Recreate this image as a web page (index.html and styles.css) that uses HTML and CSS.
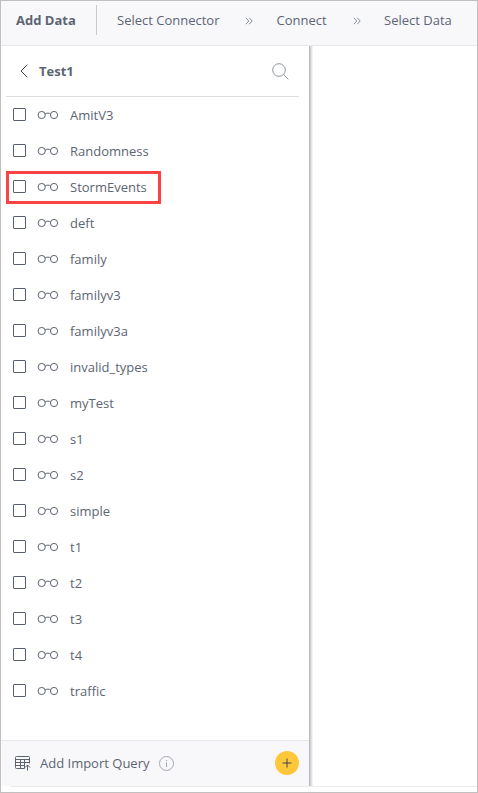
FILE: index.html
```html
<!DOCTYPE html>
<html lang="en">
<head>
<meta charset="utf-8">
<title>Add Data</title>
<link rel="stylesheet" href="styles.css">
</head>
<body>
<svg class="defs" aria-hidden="true">
  <symbol id="glasses" viewBox="0 0 22 10"><circle cx="4.7" cy="5" r="3.6"/><circle cx="17" cy="5" r="3.6"/><path d="M8 4.2C9 2.8 12.7 2.8 13.7 4.2"/></symbol>
  <symbol id="chevrons" viewBox="0 0 8 8"><path d="M.8.8 3.8 4 .8 7.2M4.2.8 7.2 4 4.2 7.2"/></symbol>
</svg>
<div class="app">
  <header class="topbar">
    <strong class="title">Add Data</strong>
    <nav class="steps">
      <span class="step connector">Select Connector</span>
      <svg class="chev"><use href="#chevrons"/></svg>
      <span class="step connect">Connect</span>
      <svg class="chev"><use href="#chevrons"/></svg>
      <span class="step">Select Data</span>
    </nav>
  </header>
  <main class="content">
    <section class="panel">
      <div class="panel-head">
        <svg class="back" viewBox="0 0 8 14"><path d="M7.3.7 1 7l6.3 6.3"/></svg>
        <strong class="name">Test1</strong>
        <svg class="search" viewBox="0 0 17 17"><circle cx="7" cy="7" r="6.3"/><path d="m11.5 11.5 4.8 4.8"/></svg>
      </div>
      <ul class="list">
        <li class="row"><i class="box"></i><svg class="glasses"><use href="#glasses"/></svg><span>AmitV3</span></li>
        <li class="row"><i class="box"></i><svg class="glasses"><use href="#glasses"/></svg><span>Randomness</span></li>
        <li class="row marked"><i class="box"></i><svg class="glasses"><use href="#glasses"/></svg><span>StormEvents</span></li>
        <li class="row"><i class="box"></i><svg class="glasses"><use href="#glasses"/></svg><span>deft</span></li>
        <li class="row"><i class="box"></i><svg class="glasses"><use href="#glasses"/></svg><span>family</span></li>
        <li class="row"><i class="box"></i><svg class="glasses"><use href="#glasses"/></svg><span>familyv3</span></li>
        <li class="row"><i class="box"></i><svg class="glasses"><use href="#glasses"/></svg><span>familyv3a</span></li>
        <li class="row"><i class="box"></i><svg class="glasses"><use href="#glasses"/></svg><span>invalid_types</span></li>
        <li class="row"><i class="box"></i><svg class="glasses"><use href="#glasses"/></svg><span>myTest</span></li>
        <li class="row"><i class="box"></i><svg class="glasses"><use href="#glasses"/></svg><span>s1</span></li>
        <li class="row"><i class="box"></i><svg class="glasses"><use href="#glasses"/></svg><span>s2</span></li>
        <li class="row"><i class="box"></i><svg class="glasses"><use href="#glasses"/></svg><span>simple</span></li>
        <li class="row"><i class="box"></i><svg class="glasses"><use href="#glasses"/></svg><span>t1</span></li>
        <li class="row"><i class="box"></i><svg class="glasses"><use href="#glasses"/></svg><span>t2</span></li>
        <li class="row"><i class="box"></i><svg class="glasses"><use href="#glasses"/></svg><span>t3</span></li>
        <li class="row"><i class="box"></i><svg class="glasses"><use href="#glasses"/></svg><span>t4</span></li>
        <li class="row"><i class="box"></i><svg class="glasses"><use href="#glasses"/></svg><span>traffic</span></li>
      </ul>
      <div class="panel-foot">
        <svg class="table" viewBox="0 0 16 16"><path d="M9.5 13.5h-8a1 1 0 0 1-1-1v-10a1 1 0 0 1 1-1h12a1 1 0 0 1 1 1v6M.5 4.5h14M.5 7.5h14M.5 10.5h9M5.5 4.5v9M9.5 4.5v9M12.5 15.5v-5.5M10 12.5l2.5-2.5 2.5 2.5"/></svg>
        <span class="query">Add Import Query</span>
        <svg class="info" viewBox="0 0 15 15"><circle cx="7.5" cy="7.5" r="7"/><path d="M7.5 6.3v4.7M7.5 4v1.2"/></svg>
        <svg class="add" viewBox="0 0 24 24"><circle cx="12" cy="12" r="12"/><path d="M12 7.5v9M7.5 12h9"/></svg>
      </div>
    </section>
  </main>
  <div class="baseline"></div>
</div>
</body>
</html>
```

FILE: styles.css
```css
* { box-sizing: border-box; }
body { margin: 0; }
.defs { display: none; }
svg { flex: none; fill: none; stroke: #5c6573; overflow: visible; }
.app {
  width: 478px;
  height: 793px;
  border: 1px solid #c0c0c0;
  background: #fff;
  display: flex;
  flex-direction: column;
  font: 13px/18px "Open Sans", "Noto Sans", sans-serif;
  color: #5c6573;
  overflow: hidden;
}
.topbar {
  height: 45px;
  flex: none;
  display: flex;
  align-items: flex-start;
  background: #f8f8fb;
  border-bottom: 1px solid #e8e8eb;
  white-space: nowrap;
}
.title {
  width: 96px;
  height: 30px;
  margin-top: 4px;
  padding: 6px 0 0 15px;
  border-right: 1px solid #c5cad2;
}
.steps { display: flex; align-items: center; padding: 10px 0 0 20px; }
.chev { width: 8px; height: 8px; margin-top: 1px; stroke: #858c98; }
.connector { width: 128px; }
.connect { width: 76px; }
.steps .chev + .step { margin-left: 23.5px; }
.content { height: 740px; flex: none; }
.panel {
  width: 308px;
  height: 740px;
  display: flex;
  flex-direction: column;
  box-shadow: 1px 0 0 #b9bbbd, 2px 0 0 #cfd0d1, 3px 0 0 #e4e4e5, 4px 0 0 #f4f4f4;
}
.panel-head {
  height: 51px;
  flex: none;
  margin: 0 10px 0 5px;
  padding-left: 14px;
  display: flex;
  align-items: center;
  border-bottom: 1px solid #dedee0;
}
.back { width: 8px; height: 14px; stroke: #3f4651; }
.name { margin-left: 11px; }
.search { width: 17px; height: 17px; margin: 0 10.5px 0 auto; stroke: #8f96a1; }
.list { list-style: none; margin: 0; padding: 0; flex: 1; }
.row { height: 36px; padding-left: 12px; display: flex; align-items: center; }
.box {
  width: 13px;
  height: 13px;
  margin-bottom: 1px;
  border: 1px solid #566071;
  border-radius: 1px;
}
.glasses { width: 22px; height: 10px; margin: 0 11px 0 11px; }
.marked {
  width: 155px;
  height: 33px;
  margin: 2px 0 1px 5px;
  padding: 0 0 1px 4px;
  border: 3px solid #fb4343;
}
.panel-foot {
  height: 46px;
  flex: none;
  display: flex;
  align-items: center;
  padding: 0 10.5px 1px 14px;
  background: #f8f8fb;
  border-top: 1px solid #e8e8eb;
}
.table { width: 16px; height: 16px; }
.query { margin-left: 9px; }
.info { width: 15px; height: 15px; margin-left: 10px; stroke: #a3a8b0; }
.add { width: 24px; height: 24px; margin-left: auto; stroke: #3c4350; }
.add circle { fill: #ffc83a; stroke: none; }
.baseline { height: 1px; flex: none; margin-left: 10px; background: #ebebed; }
```
